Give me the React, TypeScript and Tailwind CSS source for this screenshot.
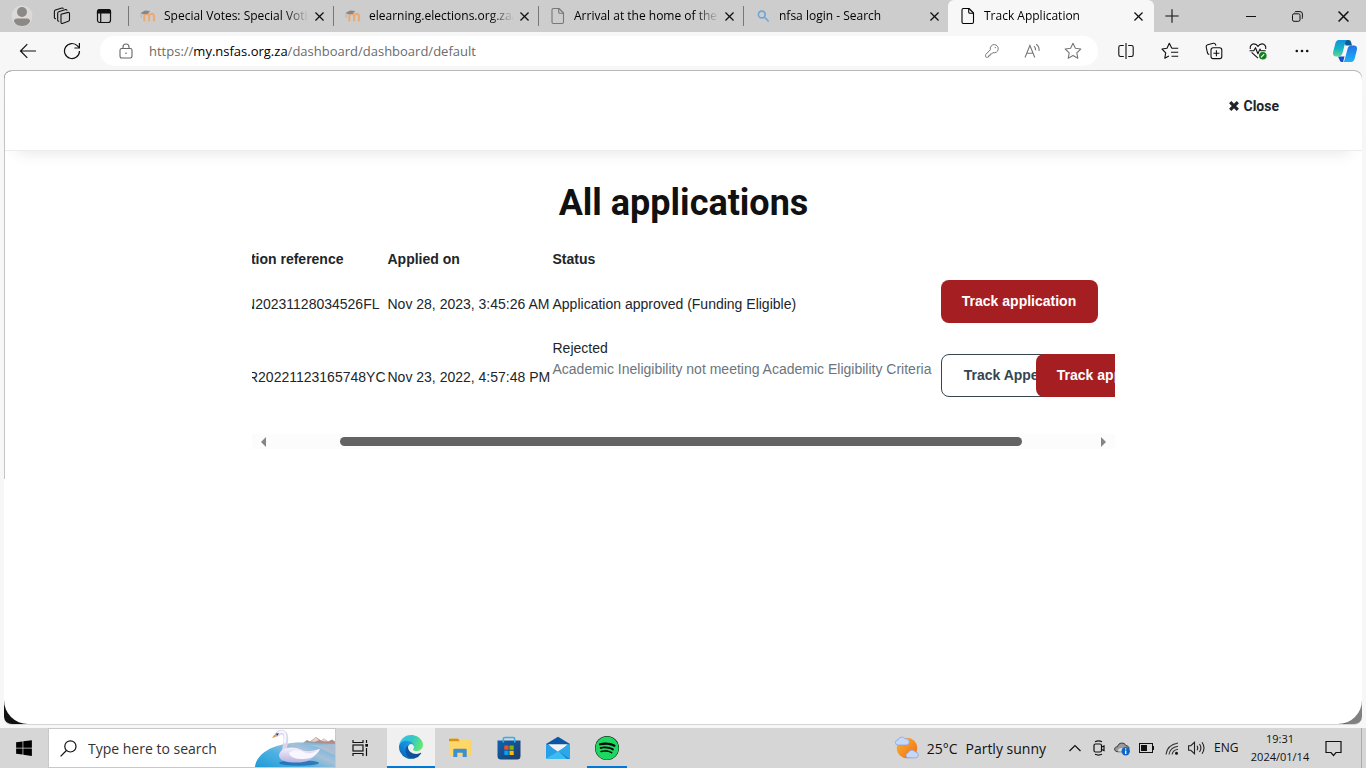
import React from "react";
import { FaSpotify, FaWindows } from "react-icons/fa";

type IconProps = { className?: string };

/* ---------- browser icons ---------- */

const Avatar = () => (
  <svg viewBox="0 0 22 22" className="size-[22px]">
    <circle cx="11" cy="11" r="10.5" fill="#dcdad8" />
    <circle cx="11" cy="7" r="5" fill="#8c8886" />
    <path d="M3 16.5c0-2 1-3 3-3h10c2 0 3 1 3 3-1.5 3.200-4.500 4.500-8 4.500s-6.500-1.300-8-4.500z" fill="#8c8886" />
  </svg>
);

const Workspaces = () => (
  <svg viewBox="0 0 18 18" className="size-[18px]" fill="none" stroke="#111" strokeWidth="1.100" strokeLinejoin="round" strokeLinecap="round">
    <path d="M8 7.200 15.200 5.400a1 1 0 0 1 1.300 1v6.400a1.500 1.500 0 0 1-1.100 1.500L9.300 16.400a1 1 0 0 1-1.300-1z" />
    <path d="M5.800 14.200a1 1 0 0 1-1.100-1V6a1.500 1.500 0 0 1 1-1.300l7-2.200a1 1 0 0 1 1.200.8" />
    <path d="M2.500 11.600a1 1 0 0 1-1.100-1V4.500a1.500 1.500 0 0 1 1-1.400L8.800 1a1 1 0 0 1 1.300.6" />
  </svg>
);

const TabActions = () => (
  <svg viewBox="0 0 16 16" className="size-4" fill="none" stroke="#111" strokeWidth="1.200">
    <rect x="1.500" y="1.500" width="13" height="13" rx="2.200" />
    <path d="M1.500 3.700C1.500 2.500 2.500 1.500 3.700 1.500h8.600c1.200 0 2.200 1 2.200 2.200V5h-13z" fill="#111" />
    <path d="M4.700 5v9.500" />
  </svg>
);

const Moodle = () => (
  <svg viewBox="0 0 16 16" className="size-4" fill="none">
    <path d="M4.300 13.200V8.200c0-3 4.800-3 4.800 0v5M9.100 8.200c0-3 4.900-3 4.900 0v5" stroke="#e9ac79" strokeWidth="2.200" />
    <path d="M.5 5 5 2.600l5.200.5-2.600 2.800-4.500.4z" fill="#87878a" />
    <path d="M1.200 5v5" stroke="#aaa" strokeWidth=".7" />
  </svg>
);

const PageIcon = ({ className = "" }: IconProps) => (
  <svg viewBox="0 0 16 18" className={`h-[18px] w-4 ${className}`} fill="none" stroke="currentColor" strokeWidth="1.100" strokeLinejoin="round">
    <path d="M2 3a1.500 1.500 0 0 1 1.500-1.500H9L13.500 6v9a1.500 1.500 0 0 1-1.500 1.500H3.500A1.500 1.500 0 0 1 2 15z" />
    <path d="M8.700 1.500V5c0 .8.500 1.300 1.300 1.300h3.500" />
  </svg>
);

const BlueSearch = () => (
  <svg viewBox="0 0 16 16" className="size-4" fill="none" stroke="#6fa5d4" strokeWidth="1.600" strokeLinecap="round">
    <circle cx="6.800" cy="6.500" r="3.400" />
    <path d="m9.500 9.200 3.700 3.800" />
  </svg>
);

const Cross = ({ className = "size-[9px]" }: IconProps) => (
  <svg viewBox="0 0 10 10" className={className} fill="none" stroke="#111" strokeWidth="1.400">
    <path d="m.5.5 9 9M9.500.5l-9 9" />
  </svg>
);

const Plus = () => (
  <svg viewBox="0 0 14 14" width="14" height="14" fill="none" stroke="#111" strokeWidth="1.100">
    <path d="M7 .3v13.400M.3 7h13.400" />
  </svg>
);

const Minimise = () => (
  <svg viewBox="0 0 10 10" width="10" height="10" stroke="#111">
    <path d="M0 5.500h10" />
  </svg>
);

const Restore = () => (
  <svg viewBox="0 0 11 11" width="11" height="11" fill="none" stroke="#111">
    <rect x=".5" y="2.800" width="7.500" height="7.500" rx="1.500" />
    <path d="M2.700 1.200Q3 .6 4 .6h4a2.400 2.400 0 0 1 2.400 2.400v3.600q0 1-.7 1.400" />
  </svg>
);

const Back = () => (
  <svg viewBox="0 0 18 16" width="18" height="16" fill="none" stroke="#111" strokeWidth="1.200">
    <path d="M17 8H1.500M8.300 1.200 1.500 8l6.800 6.800" />
  </svg>
);

const Reload = () => (
  <svg viewBox="0 0 18 18" width="18" height="18" fill="none" stroke="#111" strokeWidth="1.200">
    <path d="M16.500 9a7.500 7.500 0 1 1-2-5.100L16.200 5.700" />
    <path d="M16.400 1v5h-5" />
  </svg>
);

const Lock = () => (
  <svg viewBox="0 0 14 16" width="14" height="16" fill="none" stroke="#666" strokeWidth="1.100">
    <rect x="1" y="5.500" width="12" height="9.500" rx="1.700" />
    <path d="M4 5.500V4a3 3 0 0 1 6 0v1.500" />
    <circle cx="7" cy="10.300" r=".8" fill="#666" stroke="none" />
  </svg>
);

const Key = () => (
  <svg viewBox="0 0 14 14" width="14" height="14" fill="none" stroke="#777" strokeLinejoin="round">
    <path d="M9.300.6A4 4 0 0 0 5.400 5.700L1 10.200q-.4.500-.4 1v1.100q0 1 1 1h1q.6 0 .9-.4V11.800H5l.3-1.800h1.400l1.200-1.400A4.100 4.100 0 1 0 9.300.6z" />
    <circle cx="10.300" cy="3.600" r=".7" fill="#777" stroke="none" />
  </svg>
);

const ReadAloud = () => (
  <svg viewBox="0 0 17 16" width="17" height="16" fill="none" stroke="#777" strokeWidth="1.100">
    <path d="M1 14.500 5.900 2.500 10.800 14.500M2.800 10.200h6.200" />
    <path d="M10 3.200q1.700 1.600 1.500 4M12.200 1.200q3.600 2.600 2.800 6.800" />
  </svg>
);

const Star = () => (
  <svg viewBox="0 0 18 18" width="18" height="18" fill="none" stroke="#777" strokeWidth="1.100" strokeLinejoin="round">
    <path d="m9 1.300 2.400 5 5.400.7-4 3.800 1 5.400L9 13.600l-4.800 2.600 1-5.400-4-3.800 5.400-.7z" />
  </svg>
);

const Split = () => (
  <svg viewBox="0 0 16 16" width="16" height="16" fill="none" stroke="#111" strokeWidth="1.100">
    <path d="M8 0v16M5.800 2.500H2.500a1.700 1.700 0 0 0-1.700 1.700v7.600a1.700 1.700 0 0 0 1.700 1.700h3.300M10.200 2.500h3.300a1.700 1.700 0 0 1 1.700 1.700v7.600a1.700 1.700 0 0 1-1.700 1.700h-3.300" />
  </svg>
);

const Favourites = () => (
  <svg viewBox="0 0 18 18" width="18" height="18" fill="none" stroke="#111" strokeWidth="1.100" strokeLinejoin="round">
    <path d="M10.800 6.200 8.300 1.300 6 6.200l-5 .8 3.700 3.800-.9 5.400 4.100-2.200M10.800 6.200h6.400M10 10.200h7.200M10.500 14.200h6.700" />
  </svg>
);

const Collections = () => (
  <svg viewBox="0 0 18 18" width="18" height="18" fill="none" stroke="#111" strokeWidth="1.100">
    <path d="M4.300 12.500a2 2 0 0 1-1.800-1.500L1.200 5a2 2 0 0 1 1.500-2.300L8.300 1.300a2 2 0 0 1 2.300 1.400l.3 1" />
    <rect x="6" y="5.800" width="10.800" height="10.800" rx="2.200" />
    <path d="M11.400 8.200v6M8.400 11.200h6" />
  </svg>
);

const Essentials = () => (
  <svg viewBox="0 0 18 18" width="18" height="18" fill="none" stroke="#111" strokeWidth="1.100" strokeLinejoin="round">
    <path d="M1.300 7C.7 4 2.500 1.900 4.900 1.900c1.700 0 3.100.9 4.100 2.500 1-1.600 2.400-2.500 4.100-2.500 2.400 0 4.200 2.100 3.600 5.100M2.600 10.300 9 16.200" />
    <path d="M.5 8.700h4.300l1.700-3 2.400 6 2-4.600 1 1.600h4.800" />
    <circle cx="13.800" cy="13.800" r="3.800" fill="#13801b" stroke="none" />
    <path d="m12 15.300 3.200-3.200" stroke="#fff" />
  </svg>
);

const Dots = () => (
  <svg viewBox="0 0 14 4" width="14" height="4" fill="#111">
    <circle cx="1.800" cy="2" r="1.300" />
    <circle cx="7" cy="2" r="1.300" />
    <circle cx="12.200" cy="2" r="1.300" />
  </svg>
);

const Copilot = () => (
  <svg viewBox="0 0 24 22" width="24" height="22">
    <defs>
      <linearGradient id="cpA" x1="0" y1="0" x2="0" y2="1">
        <stop offset="0" stopColor="#1590dc" />
        <stop offset=".55" stopColor="#17b6c4" />
        <stop offset="1" stopColor="#62d68d" />
      </linearGradient>
      <linearGradient id="cpB" x1="0" y1="0" x2="0" y2="1">
        <stop offset="0" stopColor="#2272e8" />
        <stop offset="1" stopColor="#1db4f5" />
      </linearGradient>
    </defs>
    <path d="M11 0h4.500c1.500 0 2.200.8 2.600 2.200L19 5.500h-6.500z" fill="#0b5d91" />
    <path d="M5 16.500h6.500L10 22H8.800c-1.300 0-1.800-.8-2.200-2z" fill="#1649d6" />
    <path d="M5.800 0h8.700c-1.400.4-1.900 1.400-2.300 2.800L9.500 13c-.6 2.300-1.600 3.500-3.700 3.500H3C.5 16.500-.5 14.500.200 11.800L2.300 3.500C2.900 1.200 4 0 5.800 0z" fill="url(#cpA)" />
    <path d="M18.200 22H9.500c1.400-.4 1.900-1.400 2.300-2.800L14.500 9c.6-2.300 1.600-3.500 3.700-3.500H21c2.500 0 3.500 2 2.800 4.700l-2.100 8.300c-.6 2.300-1.700 3.500-3.500 3.500z" fill="url(#cpB)" />
  </svg>
);

const HeavyCross = () => (
  <svg viewBox="0 0 10 10" width="10" height="10" stroke="#212529" strokeWidth="3.200">
    <path d="m1.200 1.200 7.600 7.600M8.800 1.200 1.200 8.800" />
  </svg>
);

/* ---------- taskbar icons ---------- */

const Magnifier = () => (
  <svg viewBox="0 0 17 17" width="17" height="17" fill="none" stroke="#111" strokeWidth="1.200">
    <circle cx="10.400" cy="6.400" r="5.600" />
    <path d="M6.400 10.500.6 16.400" />
  </svg>
);

const Swan = () => (
  <svg viewBox="0 0 80 38" className="h-[38px] w-20 shrink-0">
    <defs>
      <linearGradient id="lake" x1="0" y1="1" x2="1" y2=".3">
        <stop offset="0" stopColor="#1f9ad6" />
        <stop offset=".45" stopColor="#4fb2e2" />
        <stop offset=".75" stopColor="#a9c0d6" />
        <stop offset="1" stopColor="#63b7e6" />
      </linearGradient>
      <linearGradient id="swanBody" x1="0" y1="0" x2="0" y2="1">
        <stop offset="0" stopColor="#f4f2fd" />
        <stop offset="1" stopColor="#b9b3e0" />
      </linearGradient>
    </defs>
    <path d="m48 14 4-3 3 1.500L61 8l5 3.500 3-2 4 3 4-2 3 2V16H50z" fill="#b08d88" />
    <path d="m56 12.500 5-4.300 3 3-4 1.500zM66 12l3-2.500 3 3z" fill="#e9cfc6" />
    <path d="M0 38C1 25 18 13.500 46 13.500c13 0 24 .5 34 1V38z" fill="url(#lake)" />
    <path d="M50 16c12 0 18 6 30 10V15z" fill="#d9c0c4" opacity=".6" />
    <ellipse cx="44" cy="34" rx="20" ry="2.800" fill="#1767ae" opacity=".75" />
    <path d="M22 5.500q3.500-4 7-1.500c3.500 2.800 1.600 8 1.200 12-.2 3-1.200 5-1.700 9" fill="none" stroke="#d9d5f0" strokeWidth="4.600" strokeLinecap="round" />
    <path d="M22.500 4.800q3.500-3.500 6.500-1.300c2.500 2.300 1.200 6.500.9 10" fill="none" stroke="#f8f7ff" strokeWidth="2.200" strokeLinecap="round" />
    <path d="M24 26c1-5 6-7 12-7.500 7-.5 10 3 15 3.500 5 .5 8-.5 14-2-2 3-4 4-5 6-3 5-9 7.500-18 7.500-11 0-18-1.500-18-7.500z" fill="url(#swanBody)" />
    <path d="M34 24c5-4 10-3 16-.5 5 1.500 9 .5 15-3.500-3 6-8 10-17 10-8 0-13-2-14-6z" fill="#f8f6ff" />
    <path d="M21.500 4.800c-2 .6-3.800 2.300-4.300 4.500l4-1.800z" fill="#e79b32" />
    <path d="M21 4.500 24 4.300 22 7z" fill="#342f41" />
  </svg>
);

const TaskView = () => (
  <svg viewBox="0 0 18 16" width="18" height="16" fill="none" stroke="#111" strokeWidth="1.200">
    <path d="M1 0v2.500h10V0M1 16v-2.500h10V16M14.500 0v3M14.500 8v8" />
    <rect x="1" y="5" width="10" height="6" />
    <rect x="13.300" y="4" width="2.700" height="2.700" fill="#111" stroke="none" />
  </svg>
);

const Edge = () => (
  <svg viewBox="0 0 256 256" width="24" height="24">
    <defs>
      <linearGradient id="eA" x1=".1" x2="1" y1=".5" y2=".6">
        <stop offset="0" stopColor="#0c59a4" />
        <stop offset="1" stopColor="#114a8b" />
      </linearGradient>
      <linearGradient id="eB" x1=".8" y1=".2" x2=".2" y2="1">
        <stop offset="0" stopColor="#1b9de2" />
        <stop offset=".5" stopColor="#1383d5" />
        <stop offset="1" stopColor="#0b5cab" />
      </linearGradient>
      <linearGradient id="eC" x1="0" y1=".3" x2="1" y2=".6">
        <stop offset="0" stopColor="#35c1f1" />
        <stop offset=".5" stopColor="#36c7c5" />
        <stop offset="1" stopColor="#66eb6e" />
      </linearGradient>
    </defs>
    <g transform="translate(-4.630 -4.920)">
      <path fill="url(#eA)" d="M235.680 195.460a93.730 93.730 0 0 1-10.540 4.710 101.870 101.870 0 0 1-35.900 6.460c-47.320 0-88.540-32.550-88.540-74.320A31.480 31.480 0 0 1 117.130 105c-42.800 1.800-53.800 46.400-53.800 72.530 0 73.880 68.090 81.370 82.760 81.370 7.910 0 19.840-2.300 27-4.560l1.310-.44a128.340 128.340 0 0 0 66.600-52.800 4 4 0 0 0-5.320-5.640z" />
      <path fill="url(#eB)" d="M110.340 246.340A79.200 79.200 0 0 1 87.600 225a80.720 80.720 0 0 1 29.530-120c3.120-1.470 8.450-4.130 15.540-4a32.350 32.350 0 0 1 25.690 13 31.880 31.880 0 0 1 6.360 18.660c0-.21 24.460-79.600-80-79.600-43.900 0-80 41.660-80 78.210a130.150 130.150 0 0 0 12.110 56 128 128 0 0 0 156.380 67.110 75.550 75.550 0 0 1-62.780-8z" />
      <path fill="url(#eC)" d="M156.940 153.780c-.81 1.050-3.300 2.500-3.300 5.660 0 2.610 1.700 5.120 4.720 7.230 14.380 10 41.490 8.680 41.560 8.680a59.560 59.560 0 0 0 30.270-8.350 61.380 61.380 0 0 0 30.430-52.880c.26-22.410-8-37.310-11.340-43.910C228.080 28.760 182.340 4.920 132.600 4.920a128 128 0 0 0-128 126.200c.48-36.540 36.800-66.050 80-66.050 3.500 0 23.460.34 42 10.070 16.340 8.580 24.900 18.940 30.850 29.210 6.180 10.670 7.280 24.150 7.280 29.520s-2.740 13.330-7.790 19.910z" />
    </g>
  </svg>
);

const Explorer = () => (
  <svg viewBox="0 0 22 20" width="22" height="20">
    <path d="M0 1.500Q0 .8.800.8h8.400l1.500 2H21q.7 0 .7.700V18H.5z" fill="#f5b93a" />
    <path d="M0 1.500Q0 .8.800.8h8.400l1 2.200H0z" fill="#d8930f" />
    <path d="M0 3.500h10l1.500-1.500H21q.7 0 .7.700V18H0z" fill="#ffd766" />
    <path d="M4.300 19v-7.200q0-1 1-1h11.400q1 0 1 1V19h-4v-4.300H8.300V19z" fill="#3c8fd3" />
  </svg>
);

const Store = () => (
  <svg viewBox="0 0 24 24" width="24" height="24">
    <defs>
      <linearGradient id="bag" x1="0" y1="0" x2="1" y2="1">
        <stop offset="0" stopColor="#0e63b5" />
        <stop offset="1" stopColor="#203b65" />
      </linearGradient>
    </defs>
    <path d="M.5 4.500h23V20q0 3.500-3.500 3.500H4Q.5 23.500.5 20z" fill="url(#bag)" />
    <path d="M6.300 6.500V3q0-1.500 1.500-1.500h8.400q1.500 0 1.500 1.500v3.500" fill="none" stroke="#2fb1ec" strokeWidth="1.600" />
    <path d="M7.300 9.500h4.200v4.200H7.300z" fill="#f25022" />
    <path d="M12.500 9.500h4.200v4.200h-4.200z" fill="#7fba00" />
    <path d="M7.300 14.700h4.200v4.200H7.300z" fill="#00a4ef" />
    <path d="M12.500 14.700h4.200v4.200h-4.200z" fill="#ffb900" />
  </svg>
);

const Mail = () => (
  <svg viewBox="0 0 24 24" width="24" height="24">
    <path d="M0 8 12 .8 24 8l-12 8z" fill="#0b57a6" />
    <path d="M2 8.300h20L12 17z" fill="#f3f3f3" />
    <path d="M0 7.800 12.500 16 0 23z" fill="#27a0e8" />
    <path d="M24 7.800V23H0z" fill="#3cbcf1" />
    <path d="m12.500 15.200 11.500 7.800V7.800z" fill="#2ba8ea" />
    <path d="m12.500 15.200 11.500 7.800h-3z" fill="#1482cf" />
  </svg>
);

const Weather = () => (
  <svg viewBox="0 0 24 24" width="24" height="24">
    <defs>
      <linearGradient id="sun" x1="0" y1="0" x2="1" y2="1">
        <stop offset="0" stopColor="#fcb62a" />
        <stop offset="1" stopColor="#f0691c" />
      </linearGradient>
    </defs>
    <circle cx="12" cy="12" r="10.300" fill="url(#sun)" />
    <path d="M2.800 9a2.500 2.500 0 0 1 .2-5 4 4 0 0 1 7.200-1.200 3 3 0 0 1 1.800 6.200z" fill="#c5d8f8" stroke="#81a2dc" strokeWidth=".7" />
    <path d="M13 21.800a2.600 2.600 0 0 1 .2-5.100 4 4 0 0 1 7.200-.6 2.900 2.900 0 0 1 .8 5.700z" fill="#c5d8f8" stroke="#81a2dc" strokeWidth=".7" />
  </svg>
);

const Chevron = () => (
  <svg viewBox="0 0 12 8" width="12" height="8" fill="none" stroke="#111" strokeWidth="1.200">
    <path d="m.5 7 5.500-5.500L11.500 7" />
  </svg>
);

const MeetNow = () => (
  <svg viewBox="0 0 12 16" width="12" height="16" fill="none" stroke="#111" strokeWidth="1.200">
    <rect x="1" y="4" width="7.500" height="8" rx="1.500" />
    <path d="M8.500 7 11 6v4.500L8.500 9.500M2 1.700q3.500-1.500 7 0M2 14.300q3.500 1.500 7 0" />
  </svg>
);

const Cloud = () => (
  <svg viewBox="0 0 16 15" width="16" height="15">
    <path d="M3.500 10.700C-.8 10.200.2 5.500 3.500 5.700 4.300 1.500 10.200.7 12 4.700c2 0 3 1.300 3 3l-5 3z" fill="#9b9b9b" stroke="#333" />
    <path d="M4 10.500C4 7 8 6.500 9 7.500L8 10.700z" fill="#dcdcdc" />
    <circle cx="11.700" cy="10.300" r="4.200" fill="#0f66c2" />
    <path d="M11.700 9.500V13M11.700 7.300v1.300" stroke="#fff" strokeWidth="1.300" />
  </svg>
);

const Battery = () => (
  <svg viewBox="0 0 15 10" width="15" height="10" fill="none" stroke="#111">
    <rect x=".5" y=".5" width="13" height="9" />
    <path d="M14.500 3v4" />
    <path d="M2 2h6v6H2z" fill="#111" stroke="none" />
  </svg>
);

const Wifi = () => (
  <svg viewBox="0 0 14 13" width="14" height="13" fill="none" stroke="#333" strokeWidth="1.100">
    <path d="M1 12.500Q2 3 13 1M4 12.500Q5 5.500 13 4.200M7 12.500q1-4.500 6-5.200" />
    <circle cx="11.500" cy="11.300" r="1.500" fill="#111" stroke="none" />
  </svg>
);

const Volume = () => (
  <svg viewBox="0 0 17 14" width="17" height="14" fill="none" stroke="#222" strokeWidth="1.100">
    <path d="M.6 4.700h2.200L6.500 1.300v11.400L2.800 9.300H.6zM9 4.800q1.500 2.200 0 4.400M11.500 3q2.800 4 0 8M14 1.200q4 5.800 0 11.600" />
  </svg>
);

const Notice = () => (
  <svg viewBox="0 0 17 17" width="17" height="17" fill="none" stroke="#111" strokeWidth="1.200">
    <path d="M1 1.500h15v11h-5L8.500 15.500 6 12.500H1z" />
  </svg>
);

/* ---------- browser window ---------- */

type TabInfo = { title: string; icon: React.ReactNode; active?: boolean };

const tabs: TabInfo[] = [
  { title: "Special Votes: Special Votin", icon: <Moodle /> },
  { title: "elearning.elections.org.za/", icon: <Moodle /> },
  { title: "Arrival at the home of the", icon: <PageIcon className="text-[#777]" /> },
  { title: "nfsa login - Search", icon: <BlueSearch /> },
  { title: "Track Application", icon: <PageIcon className="text-black" />, active: true },
];

function BrowserTab({ title, icon, active }: TabInfo) {
  return (
    <div
      className={
        active
          ? "flex h-8 w-[206px] min-w-0 items-center rounded-t-md bg-[#f7f7f7] pr-1.5 pl-3"
          : "flex h-5 w-[205px] min-w-0 items-center border-l border-[#777] pr-1 pl-[11px]"
      }
    >
      <button role="tab" aria-selected={!!active} className="flex min-w-0 flex-1 items-center gap-2 text-left">
        <span className="shrink-0">{icon}</span>
        <span className="min-w-0 flex-1 overflow-hidden text-[12px] leading-4 whitespace-nowrap text-black [mask-image:linear-gradient(to_right,black_calc(100%-24px),transparent)]">
          {title}
        </span>
      </button>
      <button aria-label={`Close ${title}`} className="flex size-5 shrink-0 items-center justify-center">
        <Cross />
      </button>
    </div>
  );
}

function TabStrip() {
  return (
    <div className="flex h-8 shrink-0 items-center bg-[#cdcdcd]">
      <div className="flex w-32 shrink-0 items-center gap-0.5">
        <button aria-label="Profile" className="flex w-[42px] justify-center pl-0.5"><Avatar /></button>
        <button aria-label="Workspaces" className="flex w-9 justify-center"><Workspaces /></button>
        <button aria-label="Tab actions" className="flex w-11 justify-center"><TabActions /></button>
      </div>
      <div role="tablist" className="flex min-w-0 items-center">
        {tabs.map((t) => (
          <BrowserTab key={t.title} {...t} />
        ))}
      </div>
      <button aria-label="New tab" className="flex w-9 shrink-0 justify-center"><Plus /></button>
      <div className="ml-auto flex shrink-0">
        <button aria-label="Minimise" className="flex h-8 w-[46px] items-center justify-center"><Minimise /></button>
        <button aria-label="Restore" className="flex h-8 w-[46px] items-center justify-center"><Restore /></button>
        <button aria-label="Close window" className="flex h-8 w-[46px] items-center justify-center"><Cross className="size-[11px]" /></button>
      </div>
    </div>
  );
}

const toolbarActions = [
  { label: "Split screen", icon: <Split /> },
  { label: "Favourites", icon: <Favourites /> },
  { label: "Collections", icon: <Collections /> },
  { label: "Browser essentials", icon: <Essentials /> },
  { label: "Settings and more", icon: <Dots /> },
];

function Toolbar() {
  return (
    <div className="flex h-[38px] shrink-0 items-center bg-[#f7f7f7] pl-1.5">
      <button aria-label="Back" className="flex w-11 justify-center"><Back /></button>
      <button aria-label="Refresh" className="flex w-11 justify-center"><Reload /></button>
      <div className="mx-1.5 flex h-[30px] min-w-0 flex-1 items-center rounded-full bg-white pr-4 pl-[19px]">
        <button aria-label="Site information" className="mr-4"><Lock /></button>
        <div
          role="textbox"
          aria-label="Address"
          contentEditable
          suppressContentEditableWarning
          spellCheck={false}
          className="min-w-0 flex-1 overflow-hidden text-[13px] leading-5 whitespace-nowrap text-[#6b6b6b] outline-none"
        >
          https://<span className="text-black">my.nsfas.org.za</span>/dashboard/dashboard/default
        </div>
        <div className="flex items-center gap-[23px]">
          <button aria-label="Saved passwords"><Key /></button>
          <button aria-label="Read aloud" className="ml-0.5"><ReadAloud /></button>
          <button aria-label="Add to favourites"><Star /></button>
        </div>
      </div>
      <div className="flex shrink-0">
        {toolbarActions.map((a) => (
          <button key={a.label} aria-label={a.label} className="flex h-[38px] w-11 items-center justify-center">
            {a.icon}
          </button>
        ))}
        <button aria-label="Copilot" className="flex h-[38px] w-[42px] items-center justify-center"><Copilot /></button>
      </div>
    </div>
  );
}

/* ---------- page ---------- */

const solidButton =
  "h-[43px] w-[157px] rounded-lg bg-[#a51e22] text-[14px] font-bold whitespace-nowrap text-white";

function Applications() {
  return (
    <section className="mx-auto w-full max-w-[863px] font-['Liberation_Sans',Arial,sans-serif] text-[14px] text-[#212529]">
      <div className="overflow-hidden">
        <table className="-ml-[90px] w-[1049px] table-fixed leading-[21px] whitespace-nowrap">
          <colgroup>
            <col className="w-[226px]" />
            <col className="w-[165px]" />
            <col className="w-[388px]" />
            <col />
          </colgroup>
          <thead>
            <tr className="h-[22px] text-left">
              <th className="pr-11 text-right">Application reference</th>
              <th>Applied on</th>
              <th>Status</th>
              <th aria-label="Actions" />
            </tr>
          </thead>
          <tbody>
            <tr className="h-[68px]">
              <td className="pr-2 text-right">N20231128034526FL</td>
              <td>Nov 28, 2023, 3:45:26 AM</td>
              <td>Application approved (Funding Eligible)</td>
              <td className="pb-1.5">
                <button className={solidButton}>Track application</button>
              </td>
            </tr>
            <tr className="h-[78px]">
              <td className="pr-0.5 text-right">R20221123165748YC</td>
              <td>Nov 23, 2022, 4:57:48 PM</td>
              <td className="align-top">
                Rejected
                <br />
                <span className="text-[#6c757d]">Academic Ineligibility not meeting Academic Eligibility Criteria</span>
              </td>
              <td className="pb-1">
                <div className="flex">
                  <button className="h-[43px] w-[133px] shrink-0 rounded-lg border border-[#36454f] font-bold text-[#36454f]">
                    Track Appeal
                  </button>
                  <button className={`${solidButton} -ml-[38px] shrink-0`}>Track application</button>
                </div>
              </td>
            </tr>
          </tbody>
        </table>
      </div>
      <div className="mt-[18px] flex h-[15px] items-center justify-between bg-[#fcfcfc] px-[9px]">
        <svg viewBox="0 0 5 10" width="5" height="10"><path d="M5 0v10L0 5z" fill="#858585" /></svg>
        <div className="mr-[79px] ml-[74px] h-[9px] flex-1 rounded-full bg-[#636363]" />
        <svg viewBox="0 0 5 10" width="5" height="10"><path d="M0 0v10l5-5z" fill="#858585" /></svg>
      </div>
    </section>
  );
}

function Page() {
  return (
    <div className="flex min-h-0 flex-1 flex-col bg-[#f7f7f7] px-1 pb-[3px]">
      <div className="flex min-h-0 flex-1 flex-col rounded-lg border-t border-b border-t-[#b8b8b8] border-b-[#d5d5d5] bg-linear-to-r from-[#111] from-98% to-[#808080] to-99%">
        <main className="flex min-h-0 flex-1 flex-col rounded-t-lg rounded-b-3xl bg-white bg-[linear-gradient(#c4c4c4,#c4c4c4)] bg-[length:1px_408px] bg-no-repeat">
          <header className="ml-px flex h-20 shrink-0 justify-end border-b border-[#ececec] pt-[25px] pr-[83px] shadow-[0_12px_16px_-12px_rgba(0,0,0,0.12)]">
            <button className="flex h-5 items-center gap-1 font-['Roboto',sans-serif] text-[14px] font-bold text-[#212529]">
              <HeavyCross />
              Close
            </button>
          </header>
          <h1 className="mt-[30px] mb-[23px] ml-px text-center font-['Roboto',sans-serif] text-[36px] leading-[44px] font-bold text-[#111]">
            All applications
          </h1>
          <Applications />
        </main>
      </div>
    </div>
  );
}

/* ---------- taskbar ---------- */

function Taskbar() {
  return (
    <footer className="flex h-10 shrink-0 items-center bg-[#d6d6d6] text-[#111]">
      <button aria-label="Start" className="flex w-12 shrink-0 justify-center">
        <FaWindows className="size-[18px] text-black" />
      </button>
      <label className="flex h-10 w-72 shrink-0 items-center border border-[#c8c8c8] bg-white pl-[11px]">
        <Magnifier />
        <input
          type="text"
          aria-label="Search"
          placeholder="Type here to search"
          className="ml-[11px] min-w-0 flex-1 text-[14px] outline-none placeholder:text-[#333]"
        />
        <Swan />
      </label>
      <button aria-label="Task view" className="flex w-[51px] shrink-0 justify-center pr-0.5"><TaskView /></button>
      <nav aria-label="Apps" className="flex">
        <button aria-label="Edge" className="flex h-10 w-12 items-center justify-center border-b-2 border-[#0078d7] bg-[#f0f0f0]"><Edge /></button>
        <button aria-label="File Explorer" className="flex h-10 w-[49px] items-center justify-center"><Explorer /></button>
        <button aria-label="Store" className="flex h-10 w-[49px] items-center justify-center"><Store /></button>
        <button aria-label="Mail" className="flex h-10 w-[49px] items-center justify-center"><Mail /></button>
        <button aria-label="Spotify" className="mx-[5px] flex h-10 w-10 items-center justify-center border-b-2 border-[#0078d7] pt-0.5">
          <span className="rounded-full bg-black">
            <FaSpotify className="size-6 text-[#1ed760]" />
          </span>
        </button>
      </nav>
      <div className="ml-auto flex items-center">
        <button className="mr-[23px] flex items-center gap-2 text-[14px] whitespace-nowrap">
          <Weather />
          <span>25°C</span>
          <span>Partly sunny</span>
        </button>
        <div className="flex items-center gap-[9px]">
          <button aria-label="Hidden icons"><Chevron /></button>
          <button aria-label="Meet now" className="ml-[3px]"><MeetNow /></button>
          <button aria-label="OneDrive"><Cloud /></button>
          <button aria-label="Battery"><Battery /></button>
          <button aria-label="Network" className="ml-0.5"><Wifi /></button>
          <button aria-label="Volume"><Volume /></button>
        </div>
        <button className="ml-[9px] w-6 text-[12px]">ENG</button>
        <button className="mx-3 w-[60px] text-center text-[11px] leading-[18px] whitespace-nowrap">
          19:31
          <br />
          2024/01/14
        </button>
        <button aria-label="Notifications" className="ml-[3px] flex h-10 w-[37px] items-center border-r border-[#aaa]"><Notice /></button>
        <div className="w-1" />
      </div>
    </footer>
  );
}

export default function App() {
  return (
    <div className="flex h-screen flex-col overflow-hidden bg-[#f7f7f7] font-['Open_Sans','Noto_Sans',sans-serif]">
      <TabStrip />
      <Toolbar />
      <Page />
      <Taskbar />
    </div>
  );
}
